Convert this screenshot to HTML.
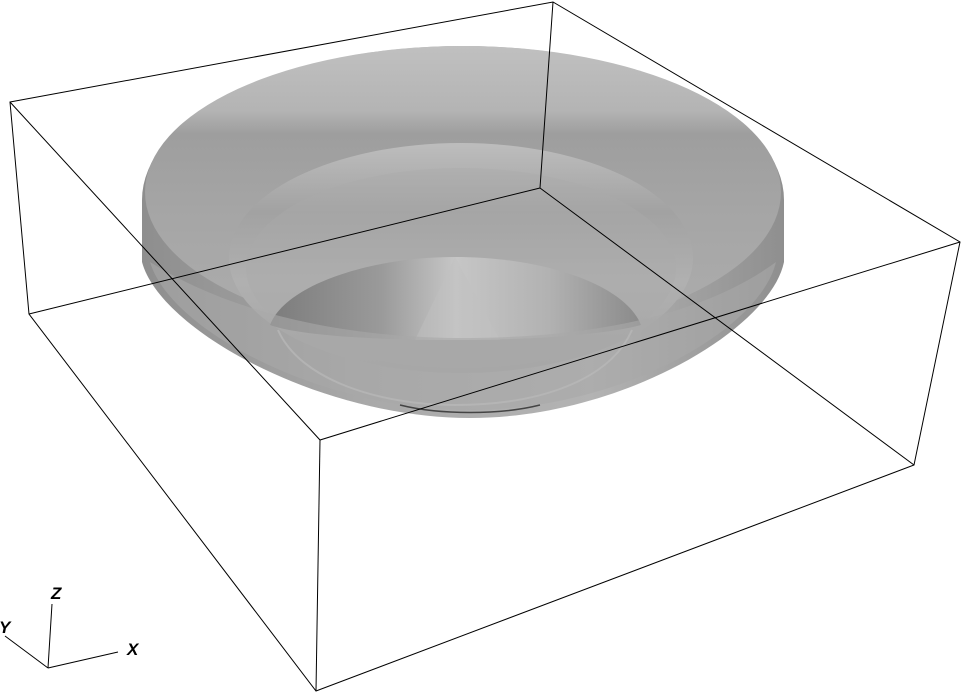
<!DOCTYPE html>
<html><head><meta charset="utf-8"><style>
html,body{margin:0;padding:0;background:#fff;}
svg{display:block;}
text{font-family:"Liberation Sans",sans-serif;font-weight:bold;font-style:italic;font-size:17px;}
</style></head><body>
<svg width="962" height="692" viewBox="0 0 962 692" xmlns="http://www.w3.org/2000/svg">
<defs>
<linearGradient id="outer" x1="0" x2="1" y1="0" y2="0">
<stop offset="0" stop-color="#8e8e8e"/><stop offset="0.35" stop-color="#a9a9a9"/><stop offset="0.7" stop-color="#b3b3b3"/><stop offset="1" stop-color="#8f8f8f"/>
</linearGradient>
<linearGradient id="inner" x1="0" x2="0" y1="0" y2="1">
<stop offset="0" stop-color="#c0c0c0"/><stop offset="0.22" stop-color="#b4b4b4"/><stop offset="0.3" stop-color="#9e9e9e"/><stop offset="0.6" stop-color="#a6a6a6"/><stop offset="1" stop-color="#adadad"/>
</linearGradient>
<linearGradient id="step" x1="0" x2="0" y1="0" y2="1">
<stop offset="0" stop-color="#bdbdbd"/><stop offset="0.3" stop-color="#a2a2a2"/><stop offset="0.6" stop-color="#b0b0b0"/><stop offset="1" stop-color="#a5a5a5"/>
</linearGradient>
<linearGradient id="dome" x1="0" x2="1" y1="0" y2="0">
<stop offset="0" stop-color="#7c7c7c"/><stop offset="0.3" stop-color="#9a9a9a"/><stop offset="0.5" stop-color="#c6c6c6"/><stop offset="0.75" stop-color="#b2b2b2"/><stop offset="1" stop-color="#8a8a8a"/>
</linearGradient>
</defs>
<path d="M142,200 A321,154 0 0 1 784,200 L784,262 C770,330 620,418 470,418 C320,418 160,330 142,262 Z" fill="url(#outer)"/>
<ellipse cx="463" cy="192" rx="318" ry="146" fill="url(#inner)"/>
<ellipse cx="461" cy="258" rx="232" ry="115" fill="url(#step)"/>
<ellipse cx="461" cy="268" rx="215" ry="100" fill="#aaaaaa" opacity="0.4"/>
<path d="M270,325 C285,285 370,257 455,257 C545,257 625,285 641,325 C600,336 520,340 455,340 C380,340 300,336 270,325 Z" fill="url(#dome)"/>
<path d="M455,257 L415,340 L500,340 Z" fill="#c2c2c2" opacity="0.45"/>
<!-- lower front band of rim -->
<path d="M150,262 C250,325 380,338 463,338 C560,338 690,325 776,262 C760,330 620,410 470,410 C320,410 170,330 150,262 Z" fill="#a8a8a8" opacity="0.6"/>
<path d="M278,330 C300,380 380,405 455,405 C540,405 610,380 632,330" fill="none" stroke="#b9b9b9" stroke-width="2" opacity="0.7"/>
<path d="M400,405 C440,415 500,415 540,405" fill="none" stroke="#444" stroke-width="1.5"/>
<g stroke="#000" stroke-width="1" fill="none">
<path d="M10,102 L553,2 L960,242 L914,465 L316,691 L29,314 Z"/>
<path d="M10,102 L320,440 L960,242"/>
<path d="M320,440 L316,691"/>
<path d="M540,188 L553,2 M540,188 L29,314 M540,188 L914,465"/>
<path d="M48,668 L52,604 M48,668 L118,652 M48,668 L5,636"/>
</g>
<text x="51" y="599">Z</text>
<text x="127" y="655">X</text>
<text x="-1" y="633">Y</text>
</svg>
</body></html>
